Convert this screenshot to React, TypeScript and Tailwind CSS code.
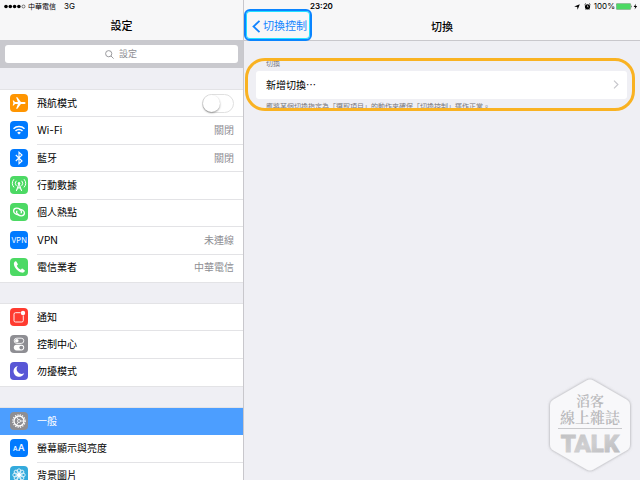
import type { ReactNode } from 'react';

type Row = {
    id: string;
    label: string;
    color: string;
    icon: ReactNode;
    value?: string;
    toggle?: boolean;
    active?: boolean;
};

const NETWORK_ROWS: Row[] = [
    {
        id: 'airplane',
        label: '飛航模式',
        color: 'bg-[#ff9500]',
        toggle: true,
        icon: (
            <path d="M15.600 9c0-.6-.9-1-1.800-1H10.900L7.400 3.200H6.100L7.900 8H5L3.700 6.500H2.700L3.400 9l-.7 2.500h1L5 10h2.900l-1.800 4.800h1.300L10.900 10h2.900c.9 0 1.800-.4 1.800-1z" fill="currentColor" />
        ),
    },
    {
        id: 'wifi',
        label: 'Wi-Fi',
        color: 'bg-[#007aff]',
        value: '關閉',
        icon: (
            <g fill="none" stroke="currentColor" strokeWidth="1.500">
                <path d="M3.500 7.800a7.800 7.800 0 0 1 11 0" />
                <path d="M5.500 9.900a4.900 4.900 0 0 1 7 0" />
                <path d="M9 13.600L7.200 11.700a2.500 2.500 0 0 1 3.600 0z" fill="currentColor" stroke="none" />
            </g>
        ),
    },
    {
        id: 'bluetooth',
        label: '藍牙',
        color: 'bg-[#007aff]',
        value: '關閉',
        icon: <path d="M5.800 6l6.200 6-3 2.700V3.300L12 6l-6.200 6" fill="none" stroke="currentColor" strokeWidth="1.100" />,
    },
    {
        id: 'cellular',
        label: '行動數據',
        color: 'bg-[#4cd964]',
        icon: (
            <g fill="none" stroke="currentColor" strokeWidth="1">
                <circle cx="9" cy="7.300" r="1.200" fill="currentColor" stroke="none" />
                <path d="M9 7.500L6.300 15M9 7.500l2.700 7.500M7.800 10.500l3.400 3M10.200 10.500l-3.400 3" />
                <path d="M6.300 4.800a3.800 3.800 0 0 0 0 5M11.700 4.800a3.800 3.800 0 0 1 0 5M4 3.200a6.400 6.400 0 0 0 0 8.200M14 3.200a6.400 6.400 0 0 1 0 8.200" />
            </g>
        ),
    },
    {
        id: 'hotspot',
        label: '個人熱點',
        color: 'bg-[#4cd964]',
        icon: (
            <g fill="none" stroke="currentColor" strokeWidth="1.300">
                <path d="M8.800 11.500C6.300 12 3.600 10.200 3.600 8c0-1.700 1.400-2.800 3.100-2.800 2.500 0 4.800 1.900 4.800 3.700 0 .6-.3 1-.8 1.200" />
                <path d="M9.200 6.500c2.500-.5 5.200 1.300 5.200 3.500 0 1.700-1.400 2.800-3.100 2.800-2.500 0-4.800-1.900-4.800-3.700 0-.6.3-1 .8-1.200" />
            </g>
        ),
    },
    {
        id: 'vpn',
        label: 'VPN',
        color: 'bg-[#007aff]',
        value: '未連線',
        icon: <text x="9" y="11.800" fontSize="7.500" textAnchor="middle" fill="currentColor">VPN</text>,
    },
    {
        id: 'carrier',
        label: '電信業者',
        color: 'bg-[#4cd964]',
        value: '中華電信',
        icon: (
            <path d="M5.400 3.300c-1 .5-1.700 1.500-1.500 3 .5 3.700 4.200 7.600 7.900 8.300 1.500.2 2.500-.6 3-1.600.1-.3 0-.6-.2-.8l-2-1.500c-.3-.2-.6-.2-.9.100l-.9.900c-1.700-.7-3.300-2.300-4-4l.9-.9c.3-.3.300-.6.100-.9L6.300 3.500c-.2-.3-.6-.4-.9-.2z" fill="currentColor" />
        ),
    },
];

const ALERT_ROWS: Row[] = [
    {
        id: 'notifications',
        label: '通知',
        color: 'bg-[#ff3b30]',
        icon: (
            <>
                <path d="M10.500 4.700H5.500a1.500 1.500 0 0 0-1.500 1.500v6.300A1.500 1.500 0 0 0 5.500 14h6.300a1.500 1.500 0 0 0 1.500-1.500V7.500" fill="none" stroke="currentColor" strokeWidth=".9" />
                <circle cx="13" cy="5" r="2.200" fill="currentColor" />
            </>
        ),
    },
    {
        id: 'control-center',
        label: '控制中心',
        color: 'bg-[#8e8e93]',
        icon: (
            <>
                <rect x="4.200" y="3.200" width="9.600" height="5.200" rx="2.600" fill="none" stroke="currentColor" strokeWidth=".9" />
                <circle cx="6.800" cy="5.800" r="1.800" fill="currentColor" />
                <rect x="3.800" y="9.800" width="10.400" height="5.600" rx="2.800" fill="currentColor" />
                <circle cx="11.300" cy="12.600" r="1.900" fill="#8e8e93" />
            </>
        ),
    },
    {
        id: 'do-not-disturb',
        label: '勿擾模式',
        color: 'bg-[#5856d6]',
        icon: <path d="M7.700 3.900a5.500 5.500 0 1 0 6.500 7.300 5 5 0 0 1-6.500-7.300z" fill="currentColor" />,
    },
];

const GENERAL_ROWS: Row[] = [
    {
        id: 'general',
        label: '一般',
        color: 'bg-[#8e8e93]',
        active: true,
        icon: (
            <g fill="none" stroke="currentColor">
                <circle cx="9" cy="9" r="6.200" strokeWidth="1.200" strokeDasharray="1.200 1.235" />
                <circle cx="9" cy="9" r="5" strokeWidth="1.300" />
                <circle cx="9" cy="9" r="1.500" strokeWidth=".8" />
                <path d="M10.500 9H14M8.300 7.700L6.500 4.700M8.300 10.300l-1.800 3" strokeWidth=".9" />
            </g>
        ),
    },
    {
        id: 'display',
        label: '螢幕顯示與亮度',
        color: 'bg-[#007aff]',
        icon: (
            <g fill="currentColor" stroke="currentColor" strokeWidth=".2">
                <text x="3" y="12.200" fontSize="6.500">A</text>
                <text x="8" y="12.200" fontSize="9.500">A</text>
            </g>
        ),
    },
    {
        id: 'wallpaper',
        label: '背景圖片',
        color: 'bg-[#34aadc]',
        icon: (
            <g fill="none" stroke="currentColor" strokeWidth=".8">
                {[0, 45, 90, 135, 180, 225, 270, 315].map((angle) => (
                    <ellipse key={angle} cx="9" cy="5.300" rx="1.900" ry="2.500" transform={`rotate(${angle} 9 9)`} />
                ))}
                <circle cx="9" cy="9" r="1.400" fill="currentColor" />
            </g>
        ),
    },
];

export default function App() {
    return (
        <div className="flex h-screen flex-col overflow-hidden bg-[#efeff4] font-['Inter','Noto_Sans_CJK_TC',sans-serif] text-[10px] text-black">
            <StatusBar />
            <div className="flex min-h-0 flex-1">
                <Sidebar />
                <SwitchesPane />
            </div>
        </div>
    );
}

function StatusBar() {
    return (
        <div className="flex h-[13px] shrink-0 bg-[#f7f7f8] text-[8px] leading-[13px]">
            <div className="flex w-61 shrink-0 items-center border-r border-[#c8c7cc] pl-[3px]">
                <svg className="h-[13px] w-[23px]" viewBox="0 0 23 13">
                    {[3, 7.300, 11.600, 15.900].map((x) => (
                        <circle key={x} cx={x} cy="6.500" r="1.800" />
                    ))}
                    <circle cx="20.500" cy="6.500" r="1.500" fill="none" stroke="#000" strokeWidth=".5" />
                </svg>
                <span className="ml-0.5 text-[7px]">中華電信</span>
                <span className="ml-2">3G</span>
            </div>
            <div className="grid flex-1 grid-cols-[1fr_auto] items-center pr-0.5">
                <span className="pl-[66px] font-semibold">23:20</span>
                <div className="flex items-center gap-[3px]">
                    <svg className="mr-px size-[6px]" viewBox="0 0 6 6">
                        <path d="M5.800.2L3.600 5.800 3.200 2.900.2 2.600z" />
                    </svg>
                    <svg className="size-[7px]" viewBox="0 0 7 7">
                        <circle cx="3.500" cy="3.800" r="2.600" />
                        <path d="M.5 1.800L2 .5M6.500 1.800L5 .5M1.700 6.600l.6-.8M5.300 6.600l-.6-.8" stroke="#000" strokeWidth=".8" />
                        <path d="M3.500 2.300v1.600h1.200" fill="none" stroke="#fff" strokeWidth=".6" />
                    </svg>
                    <span>100%</span>
                    <svg className="-ml-0.5 h-[7px] w-[22px]" viewBox="0 0 22 7">
                        <rect x=".3" y=".4" width="14.400" height="6.200" rx=".8" fill="#4cd964" stroke="#777" strokeWidth=".4" />
                        <path d="M15.200 2.300q1 1.200 0 2.400z" />
                        <path d="M20 .8L17.600 4h1.600l-.6 2.400L21.200 3h-1.700z" />
                    </svg>
                </div>
            </div>
        </div>
    );
}

function Sidebar() {
    return (
        <aside className="flex w-61 shrink-0 flex-col overflow-hidden border-r border-[#c8c7cc]">
            <header className="flex h-[27px] shrink-0 items-center justify-center bg-[#f7f7f8]">
                <h1 className="text-[11px] font-medium">設定</h1>
            </header>

            {/* Search */}
            <div className="shrink-0 bg-[#c9c9ce] px-[5px] py-[5px]">
                <label className="flex h-[18px] items-center justify-center gap-[5px] rounded-[3px] bg-white text-[#8e8e93]">
                    <svg className="size-[9px]" viewBox="0 0 9 9" fill="none" stroke="currentColor" strokeWidth=".9">
                        <circle cx="3.700" cy="3.700" r="3.100" />
                        <path d="M6 6l2.600 2.600" />
                    </svg>
                    <input
                        type="text"
                        aria-label="設定"
                        placeholder="設定"
                        className="w-[19px] bg-transparent text-[9px] leading-[18px] outline-none placeholder:text-[#8e8e93]"
                    />
                </label>
            </div>

            <nav className="flex shrink-0 flex-col gap-[22px] pt-[22px]">
                <RowGroup rows={NETWORK_ROWS} className="h-48" />
                <RowGroup rows={ALERT_ROWS} className="h-[82px]" />
                <RowGroup rows={GENERAL_ROWS} className="h-[82px]" />
            </nav>
        </aside>
    );
}

function RowGroup({ rows, className }: { rows: Row[]; className: string }) {
    return (
        <ul className={`grid auto-rows-fr bg-white outline outline-[#e3e3e6] ${className}`}>
            {rows.map((row) => (
                <SettingsRow key={row.id} row={row} />
            ))}
        </ul>
    );
}

function SettingsRow({ row }: { row: Row }) {
    const content = (
        <>
            <span className={`mb-0.5 size-[18px] shrink-0 rounded-[4px] text-white ${row.color}`}>
                <svg viewBox="0 0 18 18" className="size-full">
                    {row.icon}
                </svg>
            </span>
            <span className={`flex flex-1 items-center justify-between self-stretch border-b pr-[9px] group-last:border-transparent ${row.active ? 'border-transparent' : 'border-[#e3e3e6]'}`}>
                <span>{row.label}</span>
                {row.value && <span className="text-[#8e8e93]">{row.value}</span>}
                {row.toggle && (
                    <span className="relative flex h-[19px] w-8 items-center rounded-full border border-[#e0e0e0] bg-white">
                        <input type="checkbox" role="switch" aria-label={row.label} className="peer absolute inset-0 cursor-pointer opacity-0" />
                        <span className="pointer-events-none size-[17px] rounded-full bg-white shadow-[0_1px_2px_rgba(0,0,0,0.4)] peer-checked:ml-auto" />
                    </span>
                )}
            </span>
        </>
    );
    const layout = 'flex h-full w-full items-center gap-[9px] pl-2.5 text-left';

    return (
        <li className={`group min-h-0 ${row.active ? 'bg-[#4c9eff] text-white' : ''}`}>
            {row.toggle ? (
                <div className={layout}>{content}</div>
            ) : (
                <button type="button" className={layout}>{content}</button>
            )}
        </li>
    );
}

function SwitchesPane() {
    return (
        <main className="relative flex min-w-0 flex-1 flex-col">
            <header className="grid h-7 shrink-0 grid-cols-[1fr_auto_1fr] items-center border-b border-[#c8c7cc] bg-[#f7f7f8]">
                <a
                    href="#switch-control"
                    className="relative z-10 -mt-1 flex h-8 items-center gap-0.5 justify-self-start rounded-[6px] border-2 border-[#0a84ff] pt-0.5 pr-[3px] pl-1.5 text-[11px] text-[#1284ff] inset-ring-1 inset-ring-[#22e0ff]"
                >
                    <svg className="h-[13px] w-[9px]" viewBox="0 0 9 13" fill="none" stroke="currentColor" strokeWidth="1.800">
                        <path d="M7.500.8l-6 5.700 6 5.700" />
                    </svg>
                    切換控制
                </a>
                <h2 className="text-[11px] font-medium">切換</h2>
            </header>

            {/* Highlighted group */}
            <section className="relative mt-[18px] mr-[5px] ml-px pr-2 pl-[11px] text-[7px] text-[#77777c]">
                <h3 className="pb-[3px] pl-2.5 leading-[9px]">切換</h3>
                <button
                    type="button"
                    className="flex h-7 w-full items-center justify-between rounded-[3px] bg-white pr-2 pb-0.5 pl-2.5 font-['Noto_Sans_CJK_TC',sans-serif] text-[10px] text-black"
                >
                    新增切換⋯
                    <svg className="h-[9px] w-[6px]" viewBox="0 0 6 9" fill="none" stroke="#c7c7cc" strokeWidth="1.200">
                        <path d="M1 .6l3.900 3.900L1 8.400" />
                    </svg>
                </button>
                <p className="pt-1 pl-2.5 leading-[8px] whitespace-nowrap">
                    應將某個切換指定為「選取項目」的動作來確保「切換控制」運作正常。
                </p>
                <div className="pointer-events-none absolute inset-x-0 -top-px bottom-0 rounded-[20px] border-3 border-[#f9b222]" />
            </section>

            <Watermark />
        </main>
    );
}

function Watermark() {
    return (
        <svg className="pointer-events-none absolute right-[4px] bottom-[3px] h-[102px] w-[92px]" viewBox="0 0 92 102">
            <defs>
                <linearGradient id="metal" x1="0" y1="0" x2="1" y2="1">
                    <stop offset="0" stopColor="#bebec0" />
                    <stop offset=".5" stopColor="#cfcfd1" />
                    <stop offset="1" stopColor="#b8b8bb" />
                </linearGradient>
                <filter id="glow" x="-20%" y="-20%" width="140%" height="140%">
                    <feDropShadow dx="0" dy="0" stdDeviation="1.800" floodColor="#8a8a8e" floodOpacity=".8" />
                </filter>
            </defs>
            <path
                d="M42.500 5.600q3.500-2 7 0L82.500 24.500q3.500 2 3.500 6v39q0 4-3.500 6L49.500 94.400q-3.500 2-7 0L9.500 75.500q-3.500-2-3.500-6v-39q0-4 3.500-6z"
                fill="#f8f8fa"
                filter="url(#glow)"
            />
            <g fill="#b9b9bb" fontWeight="600" textAnchor="middle" className="font-['Noto_Serif_CJK_TC','Noto_Sans_CJK_TC',serif]">
                <text x="46" y="31" fontSize="14">滔客</text>
                <text x="46" y="47.500" fontSize="15">線上雜誌</text>
            </g>
            <path d="M14 53.500h64" stroke="#c9c9cc" />
            <text
                x="46"
                y="76.500"
                fontSize="24"
                fontWeight="900"
                textAnchor="middle"
                fill="url(#metal)"
                stroke="url(#metal)"
                strokeWidth=".8"
                className="font-['Roboto','Liberation_Sans',sans-serif]"
            >
                TALK
            </text>
        </svg>
    );
}
